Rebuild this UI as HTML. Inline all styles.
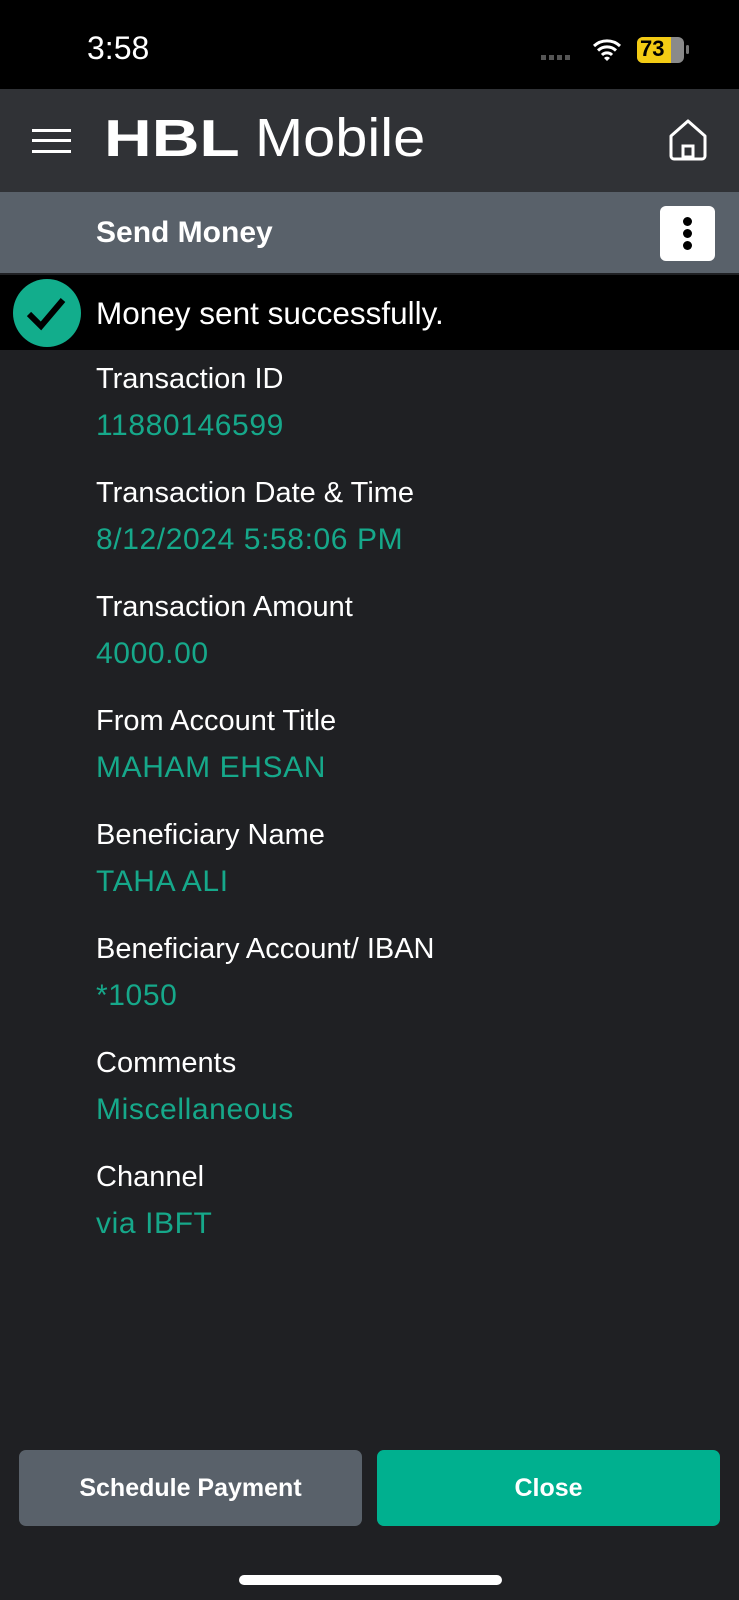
<!DOCTYPE html>
<html><head><meta charset="utf-8"><style>
*{margin:0;padding:0;box-sizing:border-box}
body{width:739px;height:1600px;background:#1f2023;font-family:"Liberation Sans",sans-serif;color:#fff;position:relative;overflow:hidden}
.abs{position:absolute}
.lbl{position:absolute;left:96px;font-size:29px;color:#fff}
.val{position:absolute;left:96px;font-size:30px;color:#16a88a;letter-spacing:0.6px}
</style></head><body>
<div class="abs" style="left:0;top:0;width:739px;height:89px;background:#000"></div>
<div class="abs" style="left:87px;top:30px;font-size:32px;">3:58</div>
<div class="abs" style="left:541px;top:55px;width:30px;height:5px;background:repeating-linear-gradient(90deg,#555 0 5px,transparent 5px 8px)"></div>
<svg class="abs" style="left:592px;top:38px" width="30" height="24" viewBox="0 0 30 24"><path d="M2 8a19 19 0 0 1 26 0M6 12.5a13 13 0 0 1 18 0M10 17a7 7 0 0 1 10 0" stroke="#fff" stroke-width="3" fill="none"/><path d="M12 20l3 3 3-3a4 4 0 0 0-6 0z" fill="#fff"/></svg>
<div class="abs" style="left:637px;top:37px;width:47px;height:26px;border-radius:6px;background:#8a8a8a;overflow:hidden"><div style="width:34px;height:26px;background:#f3cb14"></div></div>
<div class="abs" style="left:640px;top:36px;font-size:22px;font-weight:bold;color:#000">73</div>
<div class="abs" style="left:686px;top:45px;width:3px;height:9px;background:#777;border-radius:2px"></div>

<div class="abs" style="left:0;top:89px;width:739px;height:103px;background:#303236"></div>
<div class="abs" style="left:32px;top:129px;width:39px;height:3px;background:#fff;box-shadow:0 10px 0 #fff,0 21px 0 #fff"></div>
<div class="abs" style="left:104px;top:109px;font-size:52px;font-weight:bold;transform:scaleX(1.27);transform-origin:left">HBL</div>
<div class="abs" style="left:255px;top:107px;font-size:54px;transform:scaleX(1.07);transform-origin:left">Mobile</div>
<svg class="abs" style="left:668px;top:118px" width="40" height="44" viewBox="0 0 40 44"><path d="M3 18L20 3l17 15v20a3 3 0 0 1-3 3H6a3 3 0 0 1-3-3z" fill="none" stroke="#fff" stroke-width="3" stroke-linejoin="round"/><rect x="15" y="28" width="10" height="11" fill="none" stroke="#fff" stroke-width="3"/></svg>

<div class="abs" style="left:0;top:192px;width:739px;height:81px;background:#59616a"></div>
<div class="abs" style="left:96px;top:216px;font-size:30px;font-weight:bold">Send Money</div>
<div class="abs" style="left:660px;top:206px;width:55px;height:55px;background:#fff;border-radius:6px"></div>
<div class="abs" style="left:683px;top:217px;width:9px;height:9px;border-radius:50%;background:#000;box-shadow:0 12px 0 #000,0 24px 0 #000"></div>

<div class="abs" style="left:0;top:275px;width:739px;height:75px;background:#000"></div>
<div class="abs" style="left:13px;top:279px;width:68px;height:68px;border-radius:50%;background:#12ad8c"></div>
<svg class="abs" style="left:13px;top:279px" width="68" height="68" viewBox="0 0 68 68"><path d="M16 35l12 12 22-26" stroke="#000" stroke-width="6" fill="none"/></svg>
<div class="abs" style="left:96px;top:295px;font-size:31.5px">Money sent successfully.</div>

<div class="lbl" style="top:363px">Transaction ID</div><div class="val" style="top:409px">11880146599</div>
<div class="lbl" style="top:477px">Transaction Date &amp; Time</div><div class="val" style="top:523px">8/12/2024 5:58:06 PM</div>
<div class="lbl" style="top:591px">Transaction Amount</div><div class="val" style="top:637px">4000.00</div>
<div class="lbl" style="top:705px">From Account Title</div><div class="val" style="top:751px">MAHAM EHSAN</div>
<div class="lbl" style="top:819px">Beneficiary Name</div><div class="val" style="top:865px">TAHA ALI</div>
<div class="lbl" style="top:933px">Beneficiary Account/ IBAN</div><div class="val" style="top:979px">*1050</div>
<div class="lbl" style="top:1047px">Comments</div><div class="val" style="top:1093px">Miscellaneous</div>
<div class="lbl" style="top:1161px">Channel</div><div class="val" style="top:1207px">via IBFT</div>

<div class="abs" style="left:19px;top:1450px;width:343px;height:76px;background:#59616a;border-radius:7px;display:flex;align-items:center;justify-content:center;font-size:25px;font-weight:bold">Schedule Payment</div>
<div class="abs" style="left:377px;top:1450px;width:343px;height:76px;background:#00b08f;border-radius:7px;display:flex;align-items:center;justify-content:center;font-size:25px;font-weight:bold">Close</div>
<div class="abs" style="left:239px;top:1575px;width:263px;height:10px;background:#fff;border-radius:5px"></div>
</body></html>
